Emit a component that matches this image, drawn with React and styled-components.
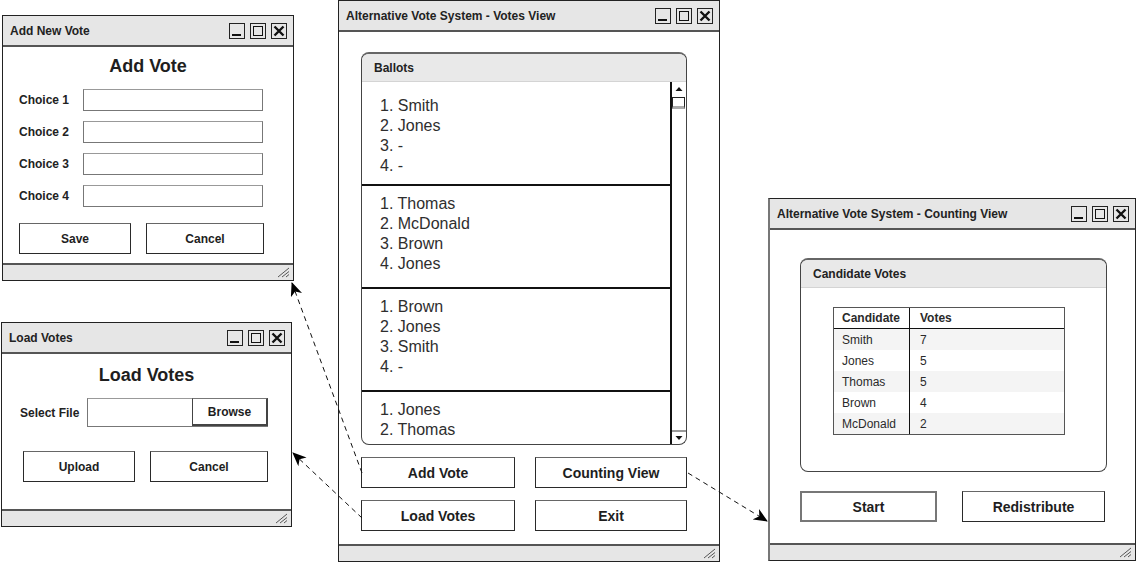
import React from "react";
import styled, { createGlobalStyle } from "styled-components";

const FONT = `"Liberation Sans", Arial, sans-serif`;

const GlobalStyle = createGlobalStyle`
  body {
    margin: 0;
    background: #fff;
    font-family: ${FONT};
    color: #1e1e1e;
  }
  * { box-sizing: border-box; }
`;

// last ballot is only partly visible in the scroll view
const ballots = [
  ["Smith", "Jones", "-", "-"],
  ["Thomas", "McDonald", "Brown", "Jones"],
  ["Brown", "Jones", "Smith", "-"],
  ["Jones", "Thomas"],
];

const counts = [
  ["Smith", 7],
  ["Jones", 5],
  ["Thomas", 5],
  ["Brown", 4],
  ["McDonald", 2],
];

const Canvas = styled.div`
  position: relative;
  width: 1138px;
  height: 565px;
  overflow: hidden;
`;

/* ---------- window chrome ---------- */

const Frame = styled.div`
  position: absolute;
  left: ${p => p.$x}px;
  top: ${p => p.$y}px;
  width: ${p => p.$w}px;
  height: ${p => p.$h}px;
  display: flex;
  flex-direction: column;
  background: #fff;
  border: 1px solid #222;
  border-left-color: ${p => (p.$soft ? "#777" : "#222")};
  border-left-width: ${p => (p.$soft ? 2 : 1)}px;
`;

const TitleBar = styled.div`
  height: 31px;
  flex: none;
  display: flex;
  align-items: center;
  justify-content: space-between;
  padding: 0 6px 0 7px;
  background: #e6e6e6;
  border-bottom: 2px solid #555;
  font-size: 12px;
  font-weight: bold;
  color: #222;
`;

const Controls = styled.div`
  display: flex;
  gap: 5px;
`;

const CtrlBox = styled.div`
  width: 16px;
  height: 16px;
  border: 1px solid #222;
  display: flex;
  align-items: center;
  justify-content: center;
`;

const Body = styled.div`
  flex: 1;
  display: flex;
  flex-direction: column;
  padding: ${p => p.$pad || "0"};
`;

const StatusBar = styled.div`
  height: 17px;
  flex: none;
  background: #e6e6e6;
  border-top: 2px solid #555;
  display: flex;
  justify-content: flex-end;
  align-items: flex-end;
  padding: 0 3px 2px 0;
`;

const WinControls = () => (
  <Controls>
    <CtrlBox>
      <svg width="14" height="14" viewBox="0 0 14 14">
        <rect x="2" y="10" width="9" height="2" fill="#111" />
      </svg>
    </CtrlBox>
    <CtrlBox>
      <svg width="14" height="14" viewBox="0 0 14 14">
        <rect x="2.5" y="2.5" width="9" height="9" fill="none" stroke="#111" strokeWidth="1" />
      </svg>
    </CtrlBox>
    <CtrlBox>
      <svg width="14" height="14" viewBox="0 0 14 14">
        <path d="M2.5 2.5 L11.5 11.5 M11.5 2.5 L2.5 11.5" stroke="#111" strokeWidth="2.4" />
      </svg>
    </CtrlBox>
  </Controls>
);

const Grip = () => (
  <svg width="14" height="12" viewBox="0 0 14 12">
    <path d="M2 11 L13 2 M6 11 L13 5.5 M10 11 L13 8.5" stroke="#555" strokeWidth="1" />
  </svg>
);

const Window = ({ title, x, y, w, h, soft, pad, children }) => (
  <Frame $x={x} $y={y} $w={w} $h={h} $soft={soft}>
    <TitleBar>
      <span>{title}</span>
      <WinControls />
    </TitleBar>
    <Body $pad={pad}>{children}</Body>
    <StatusBar>
      <Grip />
    </StatusBar>
  </Frame>
);

/* ---------- form parts ---------- */

const Heading = styled.h2`
  margin: 0;
  text-align: center;
  font-size: 18px;
  line-height: 22px;
  font-weight: bold;
  color: #1e1e1e;
`;

const FormGrid = styled.div`
  display: grid;
  grid-template-columns: ${p => p.$label}px ${p => p.$field}px;
  row-gap: 10px;
  align-items: center;
  padding-left: ${p => p.$left}px;
  margin-top: ${p => p.$top}px;
`;

const Label = styled.label`
  font-size: 12px;
  font-weight: bold;
  color: #222;
`;

const Field = styled.div`
  height: ${p => p.$h || 22}px;
  border: 1px solid #777;
  border-top-color: #999;
  background: #fff;
  display: flex;
  justify-content: flex-end;
`;

const Browse = styled.div`
  width: 76px;
  margin: -1px -1px 0 0;
  border: 1px solid #444;
  border-right-width: 2px;
  border-bottom-width: 2px;
  border-top-color: #777;
  display: flex;
  align-items: center;
  justify-content: center;
  font-size: 12px;
  font-weight: bold;
`;

const ButtonRow = styled.div`
  display: grid;
  grid-template-columns: ${p => p.$cols};
  column-gap: ${p => p.$gap}px;
  row-gap: ${p => p.$rowGap || 0}px;
  padding-left: ${p => p.$left}px;
  margin-top: ${p => p.$top}px;
`;

const Button = styled.button`
  height: ${p => p.$h || 30}px;
  background: #fff;
  border: ${p => (p.$gray ? "2px solid #777" : "1px solid #2a2a2a")};
  border-top-color: ${p => (p.$gray ? "#777" : "#666")};
  font-family: ${FONT};
  font-size: ${p => p.$size || 12}px;
  line-height: 16px;
  font-weight: bold;
  color: #1e1e1e;
  padding: 0;
`;

/* ---------- panels ---------- */

const Panel = styled.div`
  width: ${p => p.$w}px;
  height: ${p => p.$h}px;
  border: 1px solid #444;
  border-top: 2px solid #666;
  border-radius: 8px;
  overflow: hidden;
  display: flex;
  flex-direction: column;
  background: #fff;
`;

const PanelHeader = styled.div`
  height: 28px;
  flex: none;
  background: #e9e9e9;
  border-bottom: 1px solid #d4d4d4;
  padding-left: 12px;
  display: flex;
  align-items: center;
  font-size: 12px;
  font-weight: bold;
  color: #222;
`;

const ListArea = styled.div`
  flex: 1;
  display: flex;
  min-height: 0;
`;

const List = styled.div`
  flex: 1;
  overflow: hidden;
`;

const Ballot = styled.div`
  padding: 8px 0 13px 18px;
  border-bottom: 2px solid #111;
  font-size: 16px;
  line-height: 20px;
  color: #2e2e2e;

  &:first-child {
    padding-top: 14px;
    padding-bottom: 8px;
  }
  &:last-child {
    border-bottom: none;
  }
`;

const Scrollbar = styled.div`
  width: 16px;
  flex: none;
  border-left: 2px solid #111;
  display: flex;
  flex-direction: column;
`;

const ArrowCell = styled.div`
  height: 14px;
  display: flex;
  align-items: center;
  justify-content: center;
  border-top: ${p => (p.$down ? "2px solid #999" : "none")};
`;

const Thumb = styled.div`
  height: 12px;
  margin: 1px 1px 0 0;
  border: 1px solid #222;
  border-bottom: 3px solid #aaa;
  background: #fff;
`;

const Track = styled.div`
  flex: 1;
`;

const Table = styled.div`
  width: 232px;
  margin: 19px 0 0 32px;
  border: 1px solid #555;
  display: grid;
  grid-template-columns: 76px 1fr;
  font-size: 12px;
`;

const Cell = styled.div`
  height: 21px;
  display: flex;
  align-items: center;
  padding-left: ${p => (p.$first ? 8 : 10)}px;
  background: ${p => (p.$shade ? "#f4f4f4" : "#fff")};
  border-right: ${p => (p.$first ? "1px solid #111" : "none")};
  border-bottom: ${p => (p.$head ? "1px solid #111" : "none")};
  font-weight: ${p => (p.$head ? "bold" : "normal")};
  color: #2a2a2a;
`;

/* ---------- connectors ---------- */

const Overlay = styled.svg`
  position: absolute;
  left: 0;
  top: 0;
  pointer-events: none;
`;

const Connectors = () => (
  <Overlay width="1138" height="565" viewBox="0 0 1138 565">
    <defs>
      <marker id="tip" markerWidth="14" markerHeight="12" refX="13" refY="6" orient="auto" markerUnits="userSpaceOnUse">
        <path d="M0 0 L14 6 L0 12 L4 6 Z" fill="#000" />
      </marker>
    </defs>
    <g stroke="#111" strokeWidth="1" strokeDasharray="5 4" fill="none">
      <line x1="362" y1="473" x2="292" y2="283" markerEnd="url(#tip)" />
      <line x1="362" y1="518" x2="293" y2="453" markerEnd="url(#tip)" />
      <line x1="688" y1="473" x2="767" y2="521" markerEnd="url(#tip)" />
    </g>
  </Overlay>
);

export default function App() {
  return (
    <Canvas>
      <GlobalStyle />

      <Window title="Add New Vote" x={2} y={15} w={292} h={266} pad="8px 0 0 0">
        <Heading>Add Vote</Heading>
        <FormGrid $label={64} $field={180} $left={16} $top={12}>
          {[1, 2, 3, 4].map(n => (
            <React.Fragment key={n}>
              <Label>Choice {n}</Label>
              <Field />
            </React.Fragment>
          ))}
        </FormGrid>
        <ButtonRow $cols="112px 118px" $gap={15} $left={16} $top={16}>
          <Button $h={31}>Save</Button>
          <Button $h={31}>Cancel</Button>
        </ButtonRow>
      </Window>

      <Window title="Load Votes" x={1} y={322} w={291} h={205} pad="10px 0 0 0">
        <Heading>Load Votes</Heading>
        <FormGrid $label={67} $field={181} $left={18} $top={12}>
          <Label>Select File</Label>
          <Field $h={29}>
            <Browse>Browse</Browse>
          </Field>
        </FormGrid>
        <ButtonRow $cols="112px 118px" $gap={15} $left={21} $top={24}>
          <Button $h={31}>Upload</Button>
          <Button $h={31}>Cancel</Button>
        </ButtonRow>
      </Window>

      <Window title="Alternative Vote System - Votes View" x={338} y={0} w={382} h={562} pad="20px 0 0 22px">
        <Panel $w={326} $h={393}>
          <PanelHeader>Ballots</PanelHeader>
          <ListArea>
            <List>
              {ballots.map((b, i) => (
                <Ballot key={i}>
                  {b.map((name, j) => (
                    <div key={j}>{`${j + 1}. ${name}`}</div>
                  ))}
                </Ballot>
              ))}
            </List>
            <Scrollbar>
              <ArrowCell>
                <svg width="8" height="6" viewBox="0 0 8 6"><path d="M0.5 5 L4 1 L7.5 5 Z" fill="#111" /></svg>
              </ArrowCell>
              <Thumb />
              <Track />
              <ArrowCell $down>
                <svg width="8" height="6" viewBox="0 0 8 6"><path d="M0.5 1 L4 5 L7.5 1 Z" fill="#111" /></svg>
              </ArrowCell>
            </Scrollbar>
          </ListArea>
        </Panel>
        <ButtonRow $cols="154px 152px" $gap={20} $rowGap={12} $left={0} $top={12}>
          <Button $size={14} $h={31}>Add Vote</Button>
          <Button $size={14} $h={31}>Counting View</Button>
          <Button $size={14} $h={31}>Load Votes</Button>
          <Button $size={14} $h={31}>Exit</Button>
        </ButtonRow>
      </Window>

      <Window title="Alternative Vote System - Counting View" x={768} y={198} w={368} h={363} soft pad="28px 0 0 30px">
        <Panel $w={307} $h={214}>
          <PanelHeader>Candidate Votes</PanelHeader>
          <Table>
            <Cell $head $first>Candidate</Cell>
            <Cell $head>Votes</Cell>
            {counts.map(([name, v], i) => (
              <React.Fragment key={name}>
                <Cell $first $shade={i % 2 === 0}>{name}</Cell>
                <Cell $shade={i % 2 === 0}>{v}</Cell>
              </React.Fragment>
            ))}
          </Table>
        </Panel>
        <ButtonRow $cols="137px 143px" $gap={25} $left={0} $top={19}>
          <Button $size={14} $gray $h={31}>Start</Button>
          <Button $size={14} $h={31}>Redistribute</Button>
        </ButtonRow>
      </Window>

      <Connectors />
    </Canvas>
  );
}
